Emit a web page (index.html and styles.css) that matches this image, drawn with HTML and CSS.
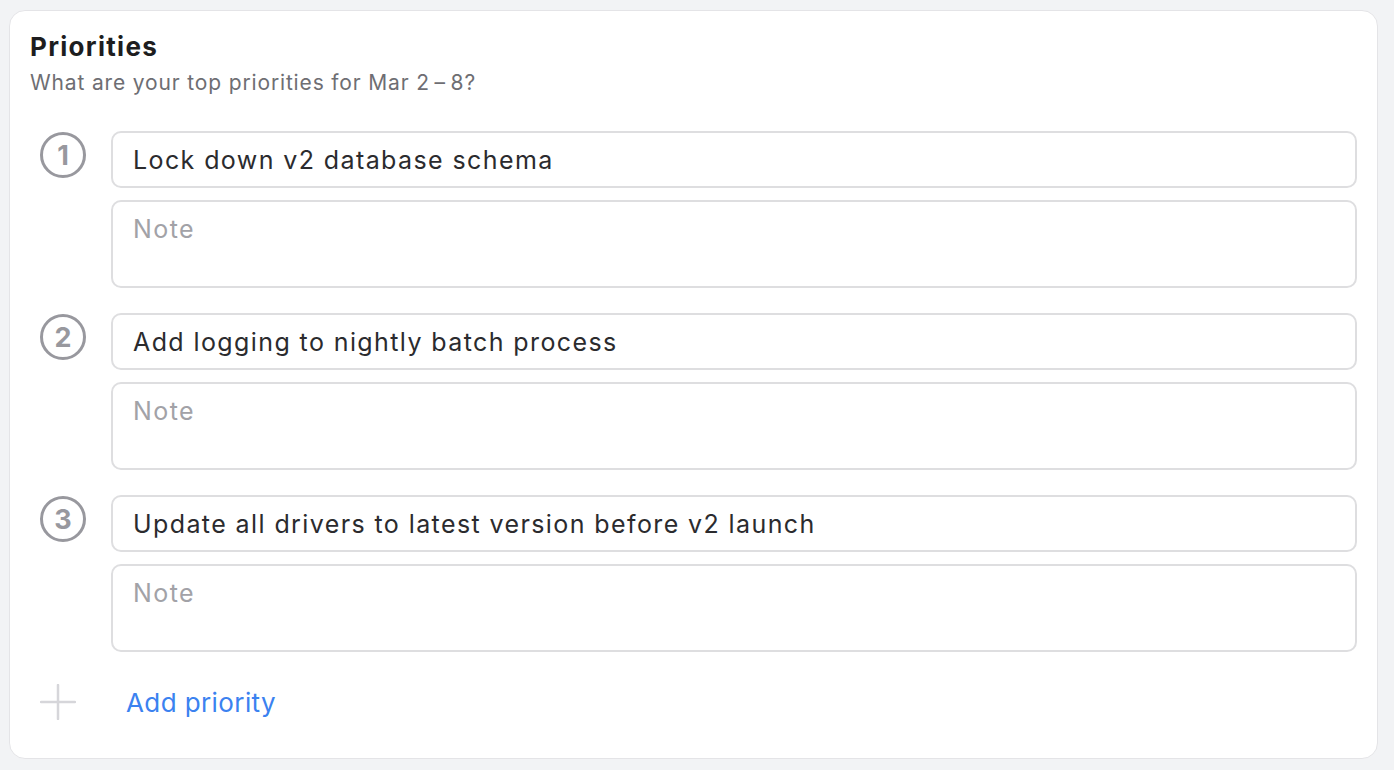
FILE: index.html
```html
<!DOCTYPE html>
<html lang="en">

<head>
    <meta charset="UTF-8">
    <meta name="viewport" content="width=device-width, initial-scale=1.0">
    <title>Priorities</title>
    <link rel="stylesheet" href="styles.css">
</head>

<body>
    <div class="card">
        <h2 class="title">Priorities</h2>
        <p class="subtitle">What are your top priorities for Mar 2&thinsp;–&thinsp;8?</p>

        <div class="list">
            <div class="priority">
                <div class="marker"><span class="num">1</span></div>
                <div class="fields">
                    <input class="field" type="text" value="Lock down v2 database schema">
                    <textarea class="field note" placeholder="Note"></textarea>
                </div>
            </div>
            <div class="priority">
                <div class="marker"><span class="num">2</span></div>
                <div class="fields">
                    <input class="field" type="text" value="Add logging to nightly batch process">
                    <textarea class="field note" placeholder="Note"></textarea>
                </div>
            </div>
            <div class="priority">
                <div class="marker"><span class="num">3</span></div>
                <div class="fields">
                    <input class="field" type="text" value="Update all drivers to latest version before v2 launch">
                    <textarea class="field note" placeholder="Note"></textarea>
                </div>
            </div>
        </div>

        <div class="add">
            <div class="marker">
                <svg class="plus" width="36" height="36" viewBox="0 0 36 36">
                    <path d="M18 1v34M1 18h34" stroke="#d6d6da" stroke-width="2.5" stroke-linecap="round" fill="none" />
                </svg>
            </div>
            <a class="add-link" href="#">Add priority</a>
        </div>
    </div>
</body>

</html>
```

FILE: styles.css
```css
* {
    margin: 0;
    padding: 0;
    box-sizing: border-box;
}

body {
    background-color: #f2f3f5;
    font-family: Inter, "Noto Sans", sans-serif;
    color: #2b2b2e;
    padding: 10px 16px 0 9px;
}

.card {
    background-color: white;
    border: 1px solid #e4e4e7;
    border-radius: 16px;
    height: 749px;
    padding: 20px 20px 20px 20px;
}

.title {
    font-size: 26px;
    line-height: 32px;
    font-weight: 700;
    letter-spacing: 1.3px;
    color: #1d1d20;
}

.subtitle {
    font-size: 21px;
    line-height: 26px;
    letter-spacing: 0.85px;
    color: #6e6e73;
    margin-top: 7px;
}

.list {
    margin-top: 35px;
    display: flex;
    flex-direction: column;
    gap: 25px;
}

.priority {
    display: flex;
}

.marker {
    width: 81px;
    flex-shrink: 0;
    padding-left: 10px;
}

.num {
    display: flex;
    justify-content: center;
    align-items: center;
    width: 46px;
    height: 46px;
    margin-top: 1px;
    border: 3px solid #98989e;
    border-radius: 50%;
    color: #98989e;
    font-size: 27px;
    font-weight: 700;
}

.fields {
    flex: 1;
    display: flex;
    flex-direction: column;
    gap: 12px;
}

.field {
    display: block;
    width: 100%;
    height: 57px;
    border: 2px solid #dedee0;
    border-radius: 10px;
    padding: 0 20px;
    font-family: inherit;
    font-size: 25px;
    letter-spacing: 1.4px;
    color: #2b2b2e;
    outline: none;
    background: white;
}

.note {
    height: 88px;
    padding-top: 11px;
    line-height: 32px;
    resize: none;
}

.field::placeholder {
    color: #a2a2a7;
}

.add {
    display: flex;
    align-items: center;
    margin-top: 32px;
}

.plus {
    display: block;
    margin-left: 0;
}

.add-link {
    color: #3b82f0;
    font-size: 26px;
    letter-spacing: 0.4px;
    text-decoration: none;
    margin-left: 15px;
}
```
